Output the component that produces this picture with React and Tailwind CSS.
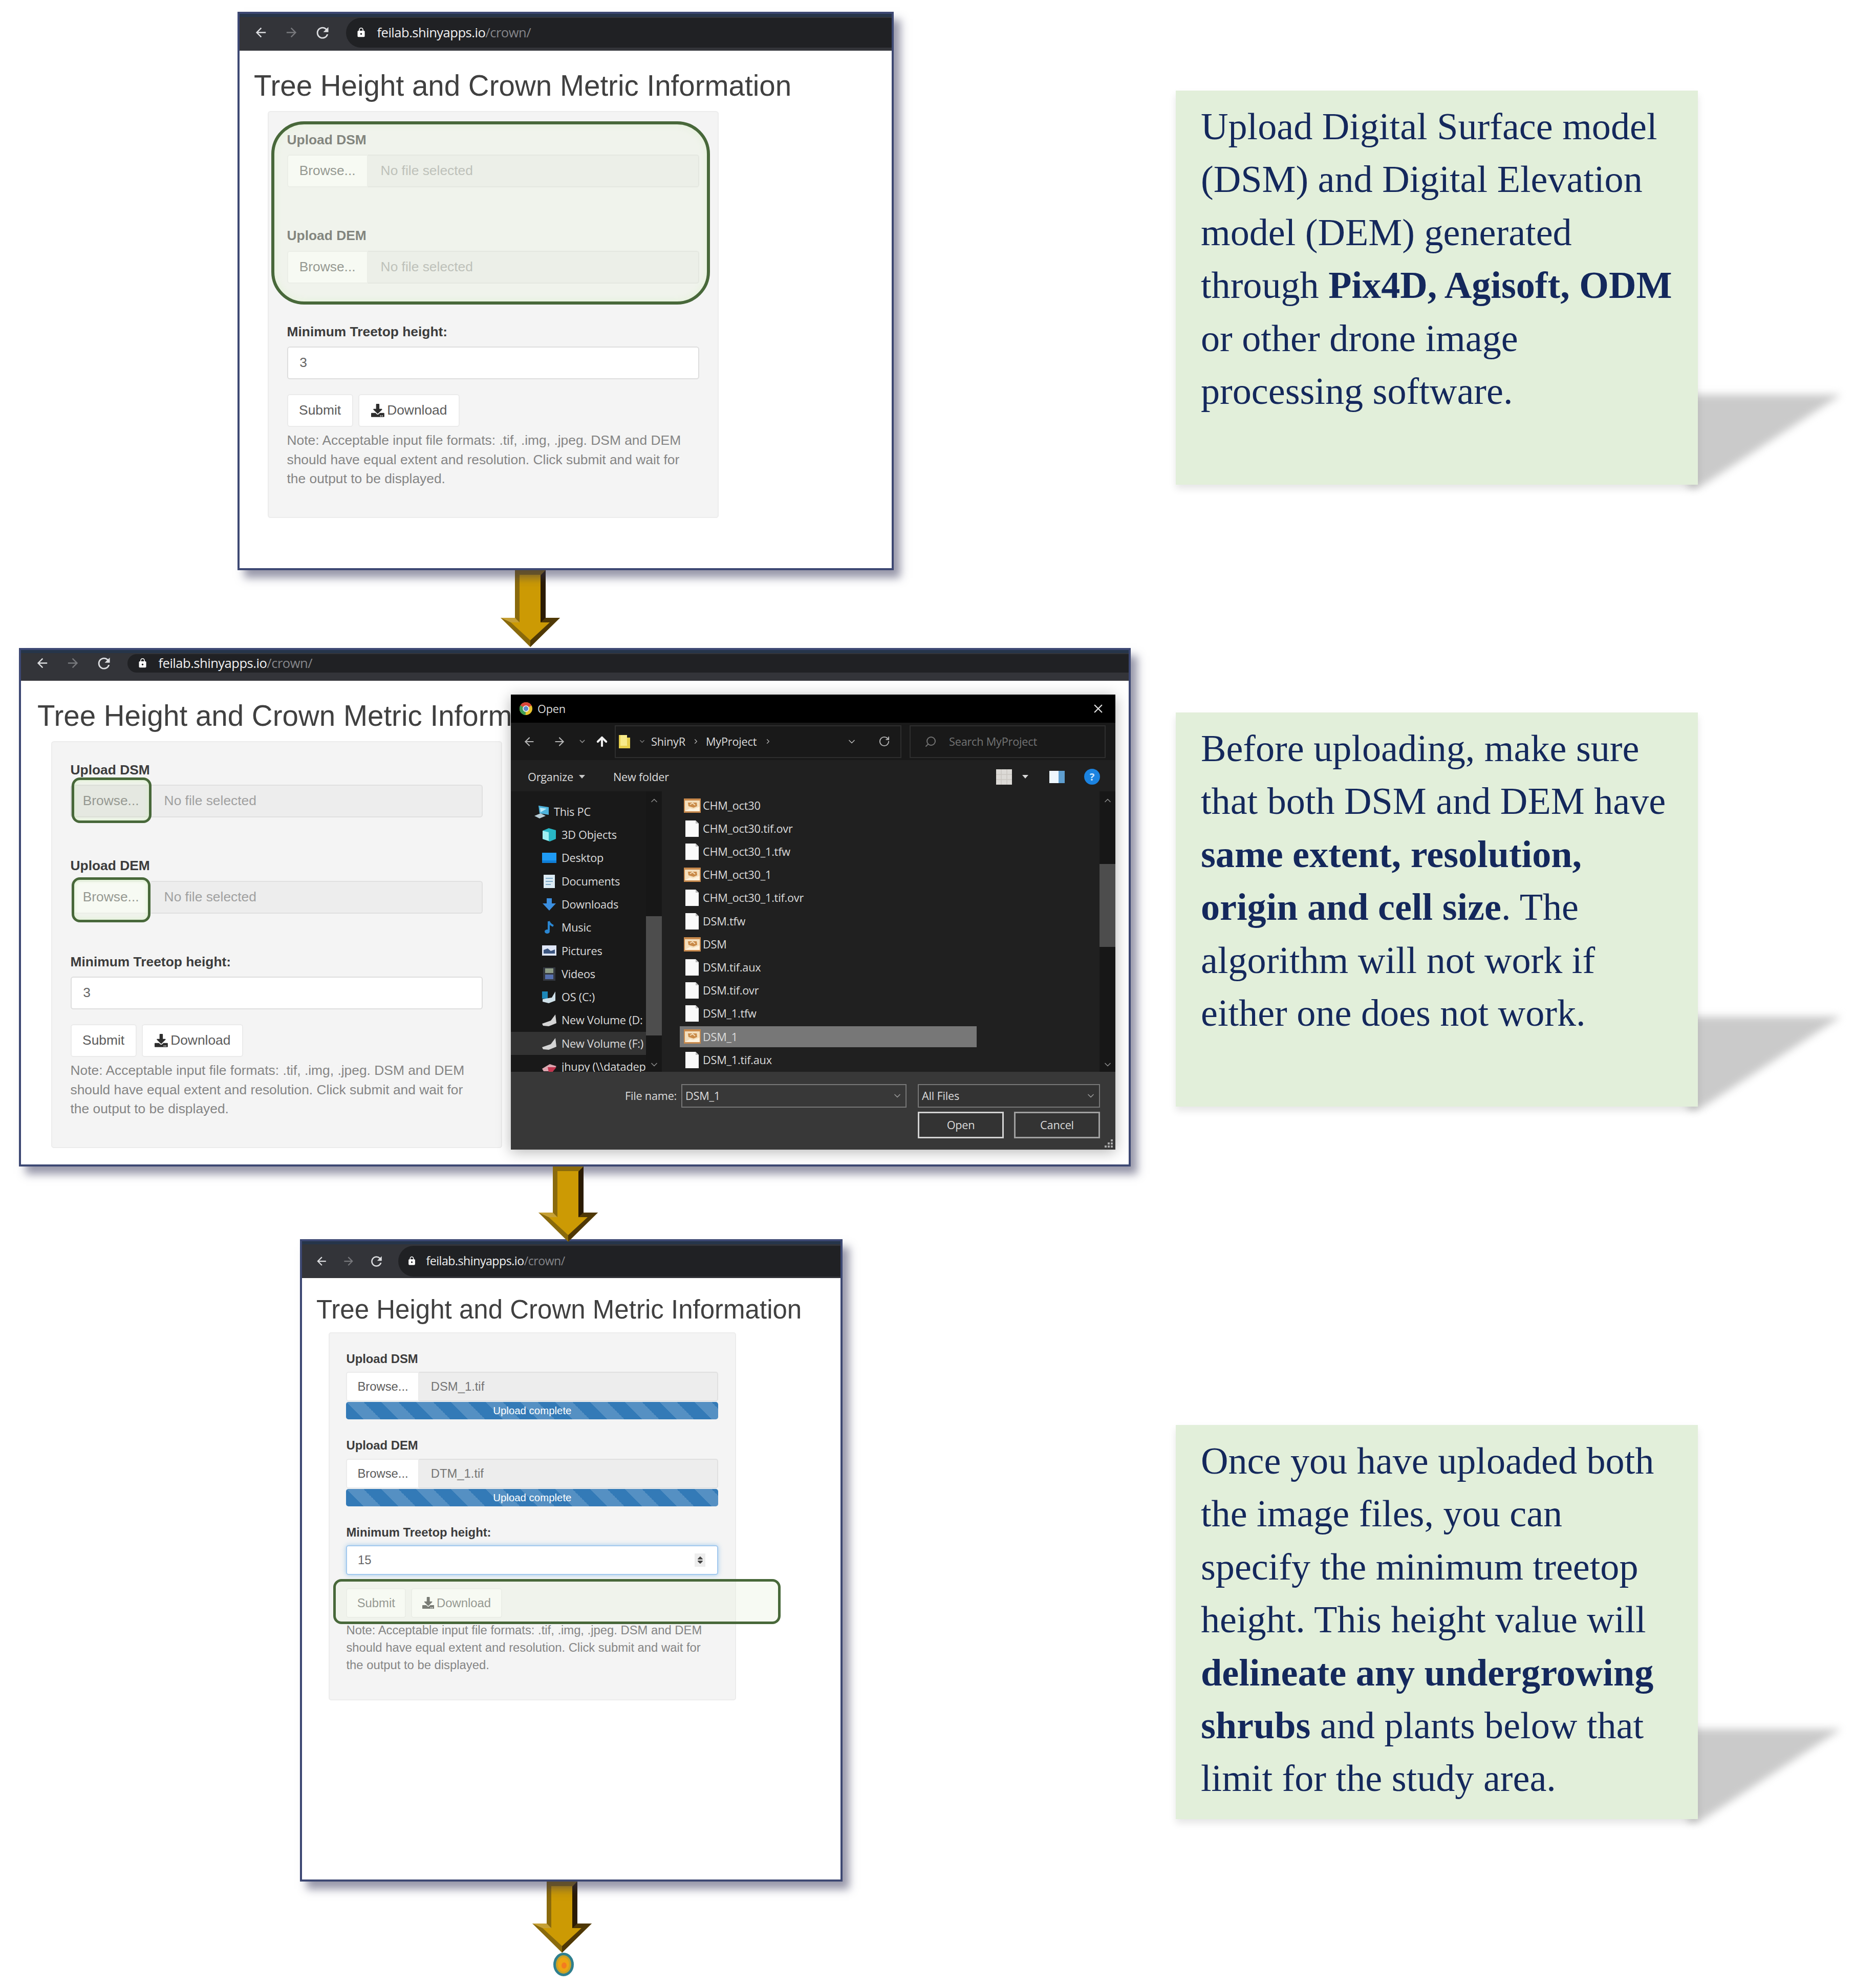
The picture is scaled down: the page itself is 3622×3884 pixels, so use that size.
import { MdArrowBack, MdArrowForward, MdRefresh, MdLock } from 'react-icons/md';
import { FaDownload, FaSort } from 'react-icons/fa';
import { ChevronDown, ChevronUp, ChevronRight, ArrowLeft, ArrowRight, ArrowUp, RotateCw, Search, X } from 'lucide-react';

const windowCls  = 'relative flex flex-col border-4 border-[#3d4873] bg-white shadow-[13px_15px_16px_rgba(50,50,85,0.5)] font-["Liberation_Sans",sans-serif]';
const controlCls = 'flex items-center h-[2.43em] border-2 rounded-[0.2em] whitespace-nowrap';
const markCls    = 'absolute border-[#48683a] bg-[#ebf3e2]/40';

const TREE = [
  { name: '3D Objects',       icon: 'cube' },
  { name: 'Desktop',          icon: 'desktop' },
  { name: 'Documents',        icon: 'doc' },
  { name: 'Downloads',        icon: 'down' },
  { name: 'Music',            icon: 'music' },
  { name: 'Pictures',         icon: 'pic' },
  { name: 'Videos',           icon: 'video' },
  { name: 'OS (C:)',          icon: 'os' },
  { name: 'New Volume (D:',   icon: 'drive' },
  { name: 'New Volume (F:)',  icon: 'drive', active: true },
  { name: 'jhupy (\\\\datadep', icon: 'net' },
];

const FILES = [
  ['CHM_oct30', 'tif'],
  ['CHM_oct30.tif.ovr', 'file'],
  ['CHM_oct30_1.tfw', 'file'],
  ['CHM_oct30_1', 'tif'],
  ['CHM_oct30_1.tif.ovr', 'file'],
  ['DSM.tfw', 'file'],
  ['DSM', 'tif'],
  ['DSM.tif.aux', 'file'],
  ['DSM.tif.ovr', 'file'],
  ['DSM_1.tfw', 'file'],
  ['DSM_1', 'tif'],
  ['DSM_1.tif.aux', 'file'],
];

function AddressBar({ className }) {
  return (
    <div className={`flex items-center bg-[#333439] pl-[1.03em] shrink-0 border-t-[6px] border-[#26354a] ${className}`}>
      <MdArrowBack className="size-[1.1em] text-[#dcdde0] mr-[1.15em]" />
      <MdArrowForward className="size-[1.1em] text-[#77787c] mr-[1.1em]" />
      <MdRefresh className="size-[1.3em] text-[#dcdde0] mr-[1.1em]" />
      <div className="flex-1 flex items-center h-[92%] rounded-l-full bg-[#202124] pl-[0.72em]">
        <MdLock className="size-[0.8em] text-white mr-[0.78em]" />
        <span className='font-["Open_Sans",sans-serif] text-[0.97em] leading-none tracking-[-0.02em] whitespace-nowrap text-[#f1f1f2]'>
          feilab.shinyapps.io<span className="text-[#85868a]">/crown/</span>
        </span>
      </div>
    </div>
  );
}

function FileInput({ label, file, hovered }) {
  return (
    <div className="h-[7.115em]">
      <div className="font-bold leading-[1.43em] mb-[0.357em] text-[#3c3c3c]">{label}</div>
      <div className="flex">
        <div className={`${controlCls} w-[6em] px-[0.84em] rounded-r-none text-[#5c5c5c] ${hovered ? 'bg-[#e2e2e2] border-[#d0d0d0]' : 'bg-white border-[#ebebeb]'}`}>Browse...</div>
        <div className={`${controlCls} flex-1 px-[0.94em] rounded-l-none border-l-0 bg-[#ededed] border-[#e0e0e0] ${file ? 'text-[#757575]' : 'text-[#a0a0a0]'}`}>
          {file || 'No file selected'}
        </div>
      </div>
      {file && (
        <div className="mt-[0.05em] h-[1.43em] rounded-[0.2em] bg-[#337ab7] bg-[linear-gradient(45deg,rgba(255,255,255,0.17)_25%,transparent_25%,transparent_50%,rgba(255,255,255,0.17)_50%,rgba(255,255,255,0.17)_75%,transparent_75%,transparent)] bg-[length:68px_68px] flex items-center justify-center text-white">
          <span className="text-[0.857em] leading-none">Upload complete</span>
        </div>
      )}
    </div>
  );
}

function CrownPage({ title = 'Tree Height and Crown Metric Information', dsm, dem, height, focused, hovered, className }) {
  return (
    <div className={`pt-[1.44em] ${className}`}>
      <h1 className="text-[2.143em] leading-[1.1em] whitespace-nowrap text-[#404040]">{title}</h1>
      <div className="ml-[1.01em] mt-[0.67em] w-[33.4em] h-[30.15em] px-[1.36em] pt-[1.36em] bg-[#f4f4f4] border-2 border-[#ececec] rounded-[0.2em]">
        <FileInput label="Upload DSM" file={dsm} hovered={hovered} />
        <FileInput label="Upload DEM" file={dem} />
        <div className="font-bold leading-[1.43em] mb-[0.357em] text-[#3c3c3c]">Minimum Treetop height:</div>
        <div className={`${controlCls} justify-between px-[0.86em] bg-white text-[#666] ${focused ? 'border-[#a3c9ee] shadow-[0_0_10px_rgba(102,175,233,0.6)]' : 'border-[#dedede]'}`}>
          {height}
          {focused && (
            <span className="flex items-center justify-center w-[0.9em] h-[1.1em] mr-[0.1em] bg-[#ededed]">
              <FaSort className="size-[0.75em] text-[#444]" />
            </span>
          )}
        </div>
        <div className="flex gap-[0.4em] mt-[1.08em] text-[#5c5c5c]">
          <div className={`${controlCls} w-[4.9em] justify-center bg-white border-[#ebebeb]`}>Submit</div>
          <div className={`${controlCls} w-[7.5em] justify-center gap-[0.2em] bg-white border-[#ebebeb]`}>
            <FaDownload className="size-[0.98em] text-[#2e2e2e]" />
            Download
          </div>
        </div>
        <p className="mt-[0.3em] leading-[1.43em] whitespace-nowrap text-[#858585]">
          Note: Acceptable input file formats: .tif, .img, .jpeg. DSM and DEM<br />
          should have equal extent and resolution. Click submit and wait for<br />
          the output to be displayed.
        </p>
      </div>
    </div>
  );
}

function DownArrow({ height, className }) {
  const h = height;
  const neck = h - 57;
  return (
    <svg width="116" height={h} viewBox={`0 0 116 ${h}`} className={className}>
      <path d={`M28 0H88V${neck}H116L58 ${h}L0 ${neck}H28Z`} fill="#8a6a0c" />
      <path d={`M88 0V${neck}H116L58 ${h}V${h - 14}L94 ${neck + 9}H78V10Z`} fill="#4f3806" />
      <path d={`M78 10L88 0V${neck}L78 ${neck + 9}Z`} fill="#2b1b04" />
      <path d={`M0 ${neck}H28L37 ${neck + 9}H20Z`} fill="#c6a035" />
      <path d={`M37 9H78V${neck + 9}H96L58 ${h - 13}L20 ${neck + 9}H37Z`} fill="#cc9a04" />
    </svg>
  );
}

function TreeIcon({ kind }) {
  return (
    <svg width="30" height="32" viewBox="0 0 30 32" className="shrink-0">
      {kind === 'pc' && <><path d="M8 4L28 7V22L10 19Z" fill="#4eb3dc" /><path d="M11 8L24 10L12 17Z" fill="#b7e8f7" /><path d="M0 24L12 19L22 24L10 29Z" fill="#b8cdd6" /></>}
      {kind === 'cube' && <><path d="M2 8L14 3L28 7V24L16 29L2 24Z" fill="#28b7c5" /><path d="M2 8L14 11V28L2 24Z" fill="#9ff0f2" /></>}
      {kind === 'desktop' && <><rect x="1" y="6" width="28" height="20" fill="#0f7fd8" /><rect x="1" y="6" width="28" height="15" fill="#1f9bf5" /></>}
      {kind === 'doc' && <><rect x="4" y="3" width="22" height="26" fill="#dcebf4" /><path d="M8 10H22M8 16H22M8 22H18" stroke="#7da9c8" strokeWidth="2" /></>}
      {kind === 'down' && <path d="M10 4H20V14H28L15 28L2 14H10Z" fill="#3b8fe0" />}
      {kind === 'music' && <><path d="M14 4V22M14 4Q16 10 23 13" stroke="#2a86d1" strokeWidth="4" fill="none" /><ellipse cx="11" cy="24" rx="5" ry="4" fill="#2a86d1" /></>}
      {kind === 'pic' && <><rect x="1" y="6" width="28" height="20" fill="#dfe6f7" /><path d="M4 22V15L12 12L18 17L26 14V22Z" fill="#3c5680" /></>}
      {kind === 'video' && <><rect x="3" y="3" width="24" height="26" fill="#33373f" /><rect x="7" y="5" width="16" height="9" fill="#8d9c86" /><rect x="7" y="17" width="16" height="9" fill="#556fae" /></>}
      {kind === 'os' && <><rect x="1" y="5" width="11" height="14" fill="#1d87b8" /><path d="M2 20L20 17L27 5V23L14 28L2 25Z" fill="#cfe0e8" /></>}
      {kind === 'drive' && <path d="M1 23L18 17L27 5L29 22L14 28L3 27Z" fill="#d4d4d4" />}
      {kind === 'net' && <><path d="M1 20L16 11L29 15L20 25L4 25Z" fill="#dca6b0" /><path d="M12 17H29L21 27H14Z" fill="#c2354e" /></>}
    </svg>
  );
}

function FileIcon({ kind }) {
  if (kind === 'tif') {
    return (
      <svg width="33" height="28" viewBox="0 0 33 28" className="shrink-0">
        <rect width="33" height="28" fill="#c8894c" />
        <rect x="2" y="4" width="29" height="21" fill="#f4dfbd" />
        <path d="M8 8H25L26 15L19 18L9 15Z" fill="#c98a48" />
        <path d="M12 12L17 9L22 13" stroke="#f4dfbd" strokeWidth="2" fill="none" />
        <path d="M2 25L12 19L18 21L31 16V25Z" fill="#fff3df" />
      </svg>
    );
  }
  return (
    <svg width="33" height="32" viewBox="0 0 33 32" className="shrink-0">
      <path d="M3 0H23L29 6V32H3Z" fill="#fafafa" />
      <path d="M23 0V6H29Z" fill="#bdbdbd" />
    </svg>
  );
}

function ScrollBar({ className, thumb }) {
  return (
    <div className={`flex flex-col items-center bg-[#171717] shrink-0 text-[#8a8a8a] pt-2 pb-1 ${className}`}>
      <ChevronUp size={20} />
      <div className={`w-full bg-[#4d4d4d] ${thumb}`} />
      <ChevronDown size={20} className="mt-auto" />
    </div>
  );
}

function OpenDialog() {
  return (
    <div className='absolute left-[957px] top-[87px] w-[1181px] h-[889px] flex flex-col bg-[#202020] text-[#dcdcdc] font-["Open_Sans",sans-serif] text-[21.7px] leading-none tracking-[-0.01em] shadow-[0_4px_26px_rgba(0,0,0,0.3)]'>
      {/* Title bar */}
      <div className="h-[55px] shrink-0 flex items-center bg-black pl-4 pr-[20px]">
        <svg width="27" height="27" viewBox="0 0 28 28" className="mr-[9px]">
          <circle cx="14" cy="14" r="13" fill="#e8c22e" />
          <path d="M14 14L2.7 7.5A13 13 0 0 1 25.3 7.5Z" fill="#d9463a" />
          <path d="M14 14L2.7 7.5A13 13 0 0 0 13 27Z" fill="#3f9e54" />
          <circle cx="14" cy="14" r="6.5" fill="#f3f3f3" />
          <circle cx="14" cy="14" r="4.8" fill="#5d86c9" />
        </svg>
        <span>Open</span>
        <X size={27} className="ml-auto text-[#e0e0e0]" />
      </div>

      {/* Address and search */}
      <div className="h-[73px] shrink-0 flex items-center bg-[#191919] pl-[23px] pr-[19px]">
        <ArrowLeft size={26} className="mr-[33px] text-[#b5b5b5]" />
        <ArrowRight size={26} className="mr-[23px] text-[#b5b5b5]" />
        <ChevronDown size={17} className="mr-[16px] text-[#8f8f8f]" />
        <ArrowUp size={28} strokeWidth={3.5} className="mr-[11px] text-[#f0f0f0]" />
        <div className="w-[560px] h-[64px] border-2 border-[#2e2e2e] flex items-center pl-[6px]">
          <svg width="22" height="28" viewBox="0 0 22 28" className="mr-[16px]">
            <path d="M0 1H16V6H22V27H0Z" fill="#e6cf4c" />
            <path d="M3 1H16V22H3Z" fill="#f7ea8a" />
          </svg>
          <ChevronDown size={15} className="mr-[10px] text-[#8f8f8f]" />
          <span className="w-[80px]">ShinyR</span>
          <ChevronRight size={15} className="mr-[12px] text-[#b5b5b5]" />
          <span className="w-[114px]">MyProject</span>
          <ChevronRight size={15} className="text-[#b5b5b5]" />
          <ChevronDown size={20} className="ml-auto mr-[42px] text-[#b5b5b5]" />
          <RotateCw size={23} className="mr-[20px] text-[#b5b5b5]" />
        </div>
        <div className="ml-auto w-[383px] h-[64px] border-2 border-[#2e2e2e] flex items-center pl-[27px] text-[#747474]">
          <Search size={24} className="mr-[24px] -scale-x-100" />
          Search MyProject
        </div>
      </div>

      {/* Command bar */}
      <div className="h-[61px] shrink-0 flex items-center pt-[4px] pl-[33px] pr-[30px]">
        <span>Organize</span>
        <span className="ml-[11px] border-x-[6px] border-x-transparent border-t-[7px] border-t-[#c8c8c8]" />
        <span className="ml-[55px]">New folder</span>
        <svg width="31" height="30" viewBox="0 0 31 30" className="ml-auto">
          <rect width="31" height="30" fill="#dcdad6" />
          <path d="M0 10H31M0 20H31M10 0V30M21 0V30" stroke="#c9c6c1" strokeWidth="1.5" />
        </svg>
        <span className="ml-[20px] border-x-[6px] border-x-transparent border-t-[7px] border-t-[#d8d8d8]" />
        <div className="ml-[41px] flex w-[30px] h-[24px] bg-[#eef7fd]"><div className="ml-auto w-3 h-full bg-[#5f9fd0]" /></div>
        <div className="ml-[38px] size-[31px] rounded-full bg-[#1b83e0] flex items-center justify-center text-[20px] font-bold text-[#cfe8ff]">?</div>
      </div>

      <div className="h-[548px] shrink-0 flex overflow-hidden">
        {/* Folder tree */}
        <div className="w-[264px] bg-[#191919] pt-[17px] whitespace-nowrap overflow-hidden shrink-0">
          <div className="h-[45.3px] flex items-center gap-[8px] pl-[46px]"><TreeIcon kind="pc" />This PC</div>
          {TREE.map((t) => (
            <div key={t.name} className={`h-[45.3px] flex items-center gap-[9px] pl-[60px] ${t.active ? 'bg-[#333]' : ''}`}>
              <TreeIcon kind={t.icon} />
              {t.name}
            </div>
          ))}
        </div>
        <ScrollBar className="w-[31px]" thumb="h-[233px] mt-[216px]" />

        {/* File list */}
        <div className="flex-1 pt-[5px] pl-[35px] whitespace-nowrap">
          {FILES.map(([name, kind]) => (
            <div key={name} className="h-[45.2px] flex items-center">
              <div className={`flex items-center gap-[4px] h-[41px] w-[580px] pl-[8px] ${name === 'DSM_1' ? 'bg-[#777]' : ''}`}>
                <FileIcon kind={kind} />
                {name}
              </div>
            </div>
          ))}
        </div>
        <ScrollBar className="w-[31px]" thumb="h-[162px] mt-[114px]" />
      </div>

      {/* File name and buttons */}
      <div className="relative flex-1 bg-[#383838] pt-[24px] pl-[223px] pr-[30px]">
        <div className="flex items-center">
          <span className="w-[110px]">File name:</span>
          <div className="w-[440px] h-[46px] border-2 border-[#777] flex items-center justify-between pl-[6px] pr-[6px]">DSM_1<ChevronDown size={20} className="text-[#9a9a9a]" /></div>
          <div className="ml-auto w-[356px] h-[46px] border-2 border-[#777] flex items-center justify-between pl-[6px] pr-[6px] bg-[#333]">All Files<ChevronDown size={20} className="text-[#9a9a9a]" /></div>
        </div>
        <div className="flex justify-end gap-[20px] mt-[8px]">
          <div className="w-[168px] h-[52px] border-[3px] border-[#d2d2d2] bg-[#333] flex items-center justify-center">Open</div>
          <div className="w-[168px] h-[52px] border-[3px] border-[#a0a0a0] bg-[#333] flex items-center justify-center">Cancel</div>
        </div>
        <svg width="20" height="20" viewBox="0 0 20 20" className="absolute right-[3px] bottom-[2px]" fill="#a8a8a8">
          <path d="M14 2h4v4h-4zM14 8h4v4h-4zM14 14h4v4h-4zM8 8h4v4H8zM8 14h4v4H8zM2 14h4v4H2z" />
        </svg>
      </div>
    </div>
  );
}

function Note({ className, children }) {
  return (
    <div className={`relative w-[1020px] h-[770px] shrink-0 ${className}`}>
      <svg width="330" height="230" viewBox="0 0 330 230" className="absolute left-[1000px] top-[568px] overflow-visible">
        <path d="M0 26H300L22 208H0Z" fill="#cacaca" className="blur-[8px]" />
      </svg>
      <div className='relative h-full bg-[#e2efda] pl-[49px] pt-[19px] font-["Liberation_Serif",serif] text-[74.15px] leading-[103.4px] whitespace-nowrap text-[#14285c] shadow-[0_8px_14px_rgba(0,0,0,0.1)]'>
        {children}
      </div>
    </div>
  );
}

export default function App() {
  return (
    <div className="w-[3622px] h-[3884px] bg-white flex overflow-hidden">
      {/* ── Steps ───────────────────────────────────── */}
      <div className="w-[2297px] shrink-0 pt-[23px]">
        <div className={`${windowCls} ml-[464px] w-[1282px] h-[1091px] text-[26.38px]`}>
          <AddressBar className="h-[72px] pb-[4px]" />
          <CrownPage height="3" className="pl-[28px]" />
          <div className={`${markCls} left-[62px] top-[210px] w-[857px] h-[358px] border-[6px] rounded-[64px] shadow-[inset_0_0_14px_rgba(222,242,208,0.8)]`} />
        </div>
        <DownArrow height={150} className="ml-[978px] mb-[2px]" />

        <div className={`${windowCls} ml-[37px] w-[2172px] h-[1013px] text-[26.38px]`}>
          <AddressBar className="h-[60px] pb-[14px]" />
          <CrownPage title="Tree Height and Crown Metric Inform" height="3" hovered className="pl-[32px]" />
          <div className={`${markCls} left-[99px] top-[249px] w-[156px] h-[89px] border-[5px] rounded-[16px] shadow-[inset_0_0_8px_rgba(214,242,196,0.9)]`} />
          <div className={`${markCls} left-[99px] top-[444px] w-[154px] h-[88px] border-[5px] rounded-[16px] shadow-[inset_0_0_8px_rgba(214,242,196,0.9)]`} />
          <OpenDialog />
        </div>
        <DownArrow height={147} className="ml-[1052px] -mb-[5px] relative z-10" />

        <div className={`${windowCls} ml-[586px] w-[1060px] h-[1255px] text-[23.82px]`}>
          <AddressBar className="h-[72px]" />
          <CrownPage dsm="DSM_1.tif" dem="DTM_1.tif" height="15" focused className="pl-[28px]" />
          <div className={`${markCls} left-[61px] top-[660px] w-[874px] h-[88px] border-[5px] rounded-[16px]`} />
        </div>
        <DownArrow height={139} className="ml-[1040px]" />
        <svg width="40" height="46" viewBox="0 0 40 46" className="ml-[1081px]">
          <ellipse cx="20" cy="23" rx="17.5" ry="20.5" fill="#c9a227" stroke="#2f7f8e" strokeWidth="5" />
          <ellipse cx="20" cy="23" rx="11" ry="14" fill="#eda512" />
          <ellipse cx="21" cy="25" rx="5" ry="6" fill="#f47b20" />
        </svg>
      </div>

      {/* ── Explanations ────────────────────────────── */}
      <div className="flex flex-col pt-[177px]">
        <Note>
          Upload Digital Surface model<br />
          (DSM) and Digital Elevation<br />
          model (DEM) generated<br />
          through <b>Pix4D, Agisoft, ODM</b><br />
          or other drone image<br />
          processing software.
        </Note>
        <Note className="mt-[445px]">
          Before uploading, make sure<br />
          that both DSM and DEM have<br />
          <b>same extent, resolution,</b><br />
          <b>origin and cell size</b>. The<br />
          algorithm will not work if<br />
          either one does not work.
        </Note>
        <Note className="mt-[622px]">
          Once you have uploaded both<br />
          the image files, you can<br />
          specify the minimum treetop<br />
          height. This height value will<br />
          <b>delineate any undergrowing</b><br />
          <b>shrubs</b> and plants below that<br />
          limit for the study area.
        </Note>
      </div>
    </div>
  );
}
